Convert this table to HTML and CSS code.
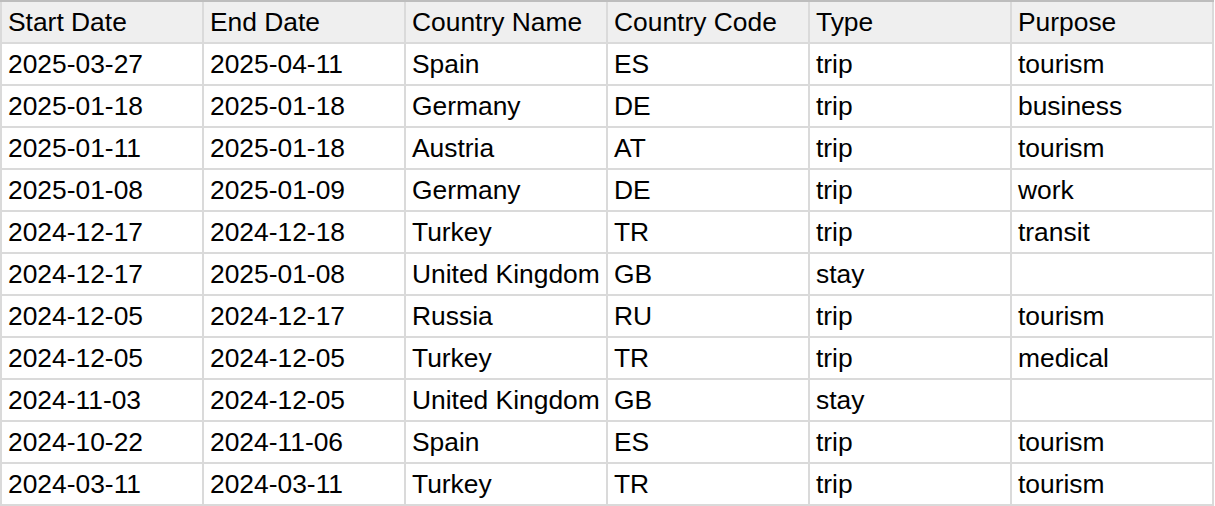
FILE: index.html
```html
<!DOCTYPE html>
<html>
<head>
<meta charset="utf-8">
<link rel="stylesheet" href="styles.css">
</head>
<body>
<table class="sheet">
  <thead>
    <tr><th>Start Date</th><th>End Date</th><th>Country Name</th><th>Country Code</th><th>Type</th><th>Purpose</th></tr>
  </thead>
  <tbody>
    <tr><td>2025-03-27</td><td>2025-04-11</td><td>Spain</td><td>ES</td><td>trip</td><td>tourism</td></tr>
    <tr><td>2025-01-18</td><td>2025-01-18</td><td>Germany</td><td>DE</td><td>trip</td><td>business</td></tr>
    <tr><td>2025-01-11</td><td>2025-01-18</td><td>Austria</td><td>AT</td><td>trip</td><td>tourism</td></tr>
    <tr><td>2025-01-08</td><td>2025-01-09</td><td>Germany</td><td>DE</td><td>trip</td><td>work</td></tr>
    <tr><td>2024-12-17</td><td>2024-12-18</td><td>Turkey</td><td>TR</td><td>trip</td><td>transit</td></tr>
    <tr><td>2024-12-17</td><td>2025-01-08</td><td>United Kingdom</td><td>GB</td><td>stay</td><td></td></tr>
    <tr><td>2024-12-05</td><td>2024-12-17</td><td>Russia</td><td>RU</td><td>trip</td><td>tourism</td></tr>
    <tr><td>2024-12-05</td><td>2024-12-05</td><td>Turkey</td><td>TR</td><td>trip</td><td>medical</td></tr>
    <tr><td>2024-11-03</td><td>2024-12-05</td><td>United Kingdom</td><td>GB</td><td>stay</td><td></td></tr>
    <tr><td>2024-10-22</td><td>2024-11-06</td><td>Spain</td><td>ES</td><td>trip</td><td>tourism</td></tr>
    <tr><td>2024-03-11</td><td>2024-03-11</td><td>Turkey</td><td>TR</td><td>trip</td><td>tourism</td></tr>
  </tbody>
</table>
</body>
</html>
```
FILE: styles.css
```css
html, body {
  margin: 0;
  padding: 0;
  background: #ffffff;
}

.sheet {
  border-collapse: separate;
  border-spacing: 2px;
  background: linear-gradient(#bdbdbd 0 2px, #dadada 2px);
  font-family: "Liberation Sans", Arial, sans-serif;
  font-size: 26.4px;
  color: #000000;
  table-layout: fixed;
  width: 1214px;
}

.sheet th,
.sheet td {
  width: 200px;
  height: 40px;
  padding: 1px 6px 0 6px;
  box-sizing: border-box;
  text-align: left;
  vertical-align: middle;
  white-space: nowrap;
  overflow: hidden;
  font-weight: normal;
  line-height: 39px;
  background: #ffffff;
}

.sheet th {
  background: #efefef;
}
```
